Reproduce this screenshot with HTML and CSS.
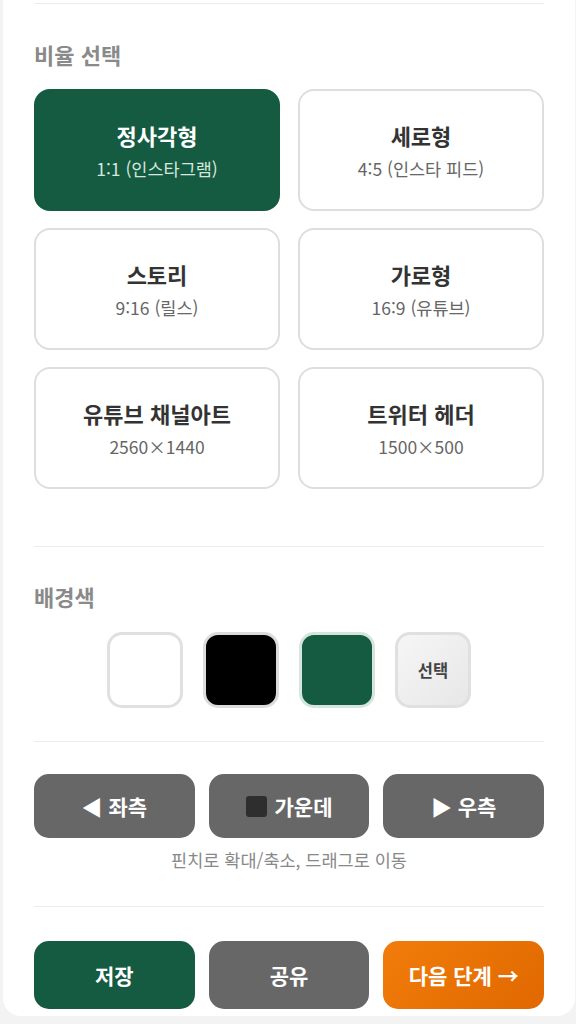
FILE: index.html
```html
<!DOCTYPE html>
<html lang="ko">
<head>
    <meta charset="UTF-8">
    <meta name="viewport" content="width=device-width, initial-scale=1.0">
    <title>이미지 편집</title>
    <link rel="stylesheet" href="styles.css">
</head>
<body>
    <div class="panel">
        <hr class="divider first">

        <section class="ratio-section">
            <h2 class="section-title">비율 선택</h2>
            <div class="ratio-grid">
                <button class="ratio-card active">
                    <span class="ratio-name">정사각형</span>
                    <span class="ratio-desc">1:1 (인스타그램)</span>
                </button>
                <button class="ratio-card">
                    <span class="ratio-name">세로형</span>
                    <span class="ratio-desc">4:5 (인스타 피드)</span>
                </button>
                <button class="ratio-card">
                    <span class="ratio-name">스토리</span>
                    <span class="ratio-desc">9:16 (릴스)</span>
                </button>
                <button class="ratio-card">
                    <span class="ratio-name">가로형</span>
                    <span class="ratio-desc">16:9 (유튜브)</span>
                </button>
                <button class="ratio-card">
                    <span class="ratio-name">유튜브 채널아트</span>
                    <span class="ratio-desc">2560×1440</span>
                </button>
                <button class="ratio-card">
                    <span class="ratio-name">트위터 헤더</span>
                    <span class="ratio-desc">1500×500</span>
                </button>
            </div>
        </section>

        <hr class="divider">

        <section class="bg-section">
            <h2 class="section-title">배경색</h2>
            <div class="swatches">
                <button class="swatch white"></button>
                <button class="swatch black"></button>
                <button class="swatch green"></button>
                <button class="swatch custom">선택</button>
            </div>
        </section>

        <hr class="divider">

        <section class="align-section">
            <div class="btn-row">
                <button class="btn gray">◀ 좌측</button>
                <button class="btn gray"><span class="square"></span>가운데</button>
                <button class="btn gray">▶ 우측</button>
            </div>
            <p class="hint">핀치로 확대/축소, 드래그로 이동</p>
        </section>

        <hr class="divider">

        <section class="action-section">
            <div class="btn-row">
                <button class="btn big green">저장</button>
                <button class="btn big gray">공유</button>
                <button class="btn big orange">다음 단계 →</button>
            </div>
        </section>
    </div>
</body>
</html>
```

FILE: styles.css
```css
body {
    margin: 0;
    padding: 0;
    background-color: #f3f3f3;
    font-family: "Noto Sans CJK KR", "Noto Sans", sans-serif;
}

.panel {
    background-color: #fff;
    margin: 0 1px 0 3px;
    padding: 0 31px 8px;
    border-radius: 0 0 18px 18px;
    height: 1016px;
    box-sizing: border-box;
}

.divider {
    border: none;
    height: 1px;
    background-color: #ececec;
    margin: 0;
}

.divider.first {
    position: relative;
    top: 3px;
}

.section-title {
    font-size: 22px;
    line-height: 30px;
    font-weight: bold;
    color: #8a8a8a;
    margin: 0;
}

.ratio-section {
    padding: 38px 0 57px;
}

.ratio-section .section-title {
    margin-bottom: 20px;
}

.ratio-grid {
    display: grid;
    grid-template-columns: 1fr 1fr;
    grid-auto-rows: 122px;
    gap: 17px 18px;
}

.ratio-card {
    display: flex;
    flex-direction: column;
    align-items: center;
    justify-content: center;
    gap: 7px;
    background-color: #fff;
    border: 2px solid #dedede;
    border-radius: 16px;
    font-family: inherit;
    padding: 0;
    cursor: pointer;
}

.ratio-name {
    font-size: 22px;
    line-height: 30px;
    font-weight: bold;
    color: #333;
}

.ratio-desc {
    font-size: 17.5px;
    line-height: 24px;
    color: #666;
}

.ratio-card.active {
    background-color: #145b41;
    border-color: #145b41;
}

.ratio-card.active .ratio-name {
    color: #fff;
}

.ratio-card.active .ratio-desc {
    color: #d6e6df;
}

.bg-section {
    padding: 34px 0 33px;
}

.bg-section .section-title {
    margin-bottom: 21px;
}

.swatches {
    display: flex;
    justify-content: center;
    gap: 20px;
}

.swatch {
    width: 76px;
    height: 76px;
    border-radius: 15px;
    border: 3px solid #e0e0e0;
    box-sizing: border-box;
    padding: 0;
    font-family: inherit;
    cursor: pointer;
}

.swatch.white {
    background-color: #fff;
}

.swatch.black {
    background-color: #000;
    border-color: #dcdcdc;
}

.swatch.green {
    background-color: #145b41;
    border-color: #d3e5dc;
}

.swatch.custom {
    background: linear-gradient(135deg, #f6f6f6, #e7e7e7);
    font-size: 16.5px;
    font-weight: bold;
    color: #444;
}

.align-section {
    padding: 32px 0 35px;
}

.btn-row {
    display: grid;
    grid-template-columns: 1fr 1fr 1fr;
    gap: 14px;
}

.btn {
    height: 64px;
    border: none;
    border-radius: 15px;
    font-family: inherit;
    font-size: 21px;
    font-weight: bold;
    color: #fff;
    display: flex;
    align-items: center;
    justify-content: center;
    cursor: pointer;
}

.btn.gray {
    background-color: #676767;
}

.btn.big {
    height: 68px;
}

.btn.green {
    background-color: #145b41;
}

.btn.orange {
    background: linear-gradient(135deg, #f27c0a, #e06800);
}

.square {
    display: inline-block;
    width: 21px;
    height: 21px;
    background-color: #2e2e2e;
    border-radius: 3px;
    margin-right: 8px;
}

.hint {
    margin: 11px 0 0;
    font-size: 17.5px;
    line-height: 22px;
    color: #888;
    text-align: center;
}

.action-section {
    padding: 34px 0 0;
}
```
